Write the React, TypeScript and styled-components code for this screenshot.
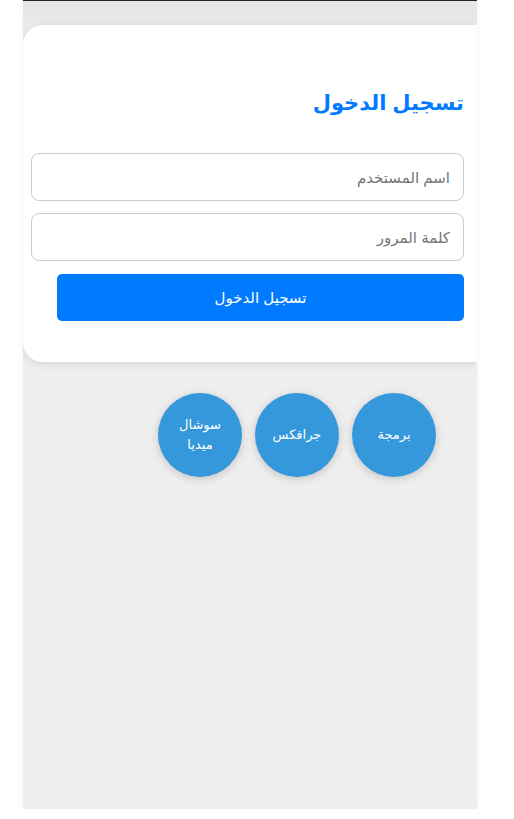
import React from "react";
import styled, { createGlobalStyle } from "styled-components";

const GlobalStyle = createGlobalStyle`
  html, body {
    margin: 0;
    padding: 0;
    background: #ffffff;
  }
  body {
    font-family: Arial, "Liberation Sans", "DejaVu Sans", sans-serif;
  }
`;

const Shell = styled.div`
  margin-left: 23px;
  width: 454px;
  height: 784px;
  border-top: 1px solid #222;
  background: linear-gradient(#e4e4e4 0px, #ebebeb 26px, #eeeeee 60px);
  box-shadow: 0 0 6px rgba(0, 0, 0, 0.06);
  overflow: hidden;
  direction: rtl;
  padding-top: 24px;
  box-sizing: content-box;
`;

const Card = styled.div`
  background: #fff;
  border-radius: 20px 0 0 20px;
  box-shadow: 0 2px 10px rgba(0, 0, 0, 0.1);
  padding: 63px 13px 41px 8px;
  display: flex;
  flex-direction: column;
`;

const Title = styled.h2`
  margin: 0 0 35px;
  color: #007bff;
  font-size: 21px;
  font-weight: bold;
  line-height: 30px;
`;

const Input = styled.input`
  height: 48px;
  box-sizing: border-box;
  border: 1px solid #ccc;
  border-radius: 8px;
  padding: 0 13px;
  font-size: 15px;
  font-family: inherit;
  margin-bottom: 12px;
  outline: none;
  &::placeholder {
    color: #757575;
  }
`;

const Submit = styled.button`
  width: 94%;
  height: 47px;
  margin-top: 1px;
  border: none;
  border-radius: 5px;
  background: #007bff;
  color: #fff;
  font-size: 15px;
  font-family: inherit;
  cursor: pointer;
`;

const Categories = styled.div`
  display: flex;
  gap: 13px;
  padding: 31px 41px 0 0;
`;

const Bubble = styled.div`
  width: 84px;
  height: 84px;
  border-radius: 50%;
  background: #3498db;
  color: #fff;
  font-size: 13px;
  line-height: 20px;
  display: flex;
  align-items: center;
  justify-content: center;
  text-align: center;
  padding: 0 20px;
  box-sizing: border-box;
  box-shadow: 0 2px 8px rgba(0, 0, 0, 0.18);
`;

export default function App() {
  return (
    <>
      <GlobalStyle />
      <Shell>
        <Card>
          <Title>تسجيل الدخول</Title>
          <Input type="text" placeholder="اسم المستخدم" />
          <Input type="password" placeholder="كلمة المرور" />
          <Submit>تسجيل الدخول</Submit>
        </Card>
        <Categories>
          {["برمجة", "جرافكس", "سوشال ميديا"].map((c) => (
            <Bubble key={c}>{c}</Bubble>
          ))}
        </Categories>
      </Shell>
    </>
  );
}
